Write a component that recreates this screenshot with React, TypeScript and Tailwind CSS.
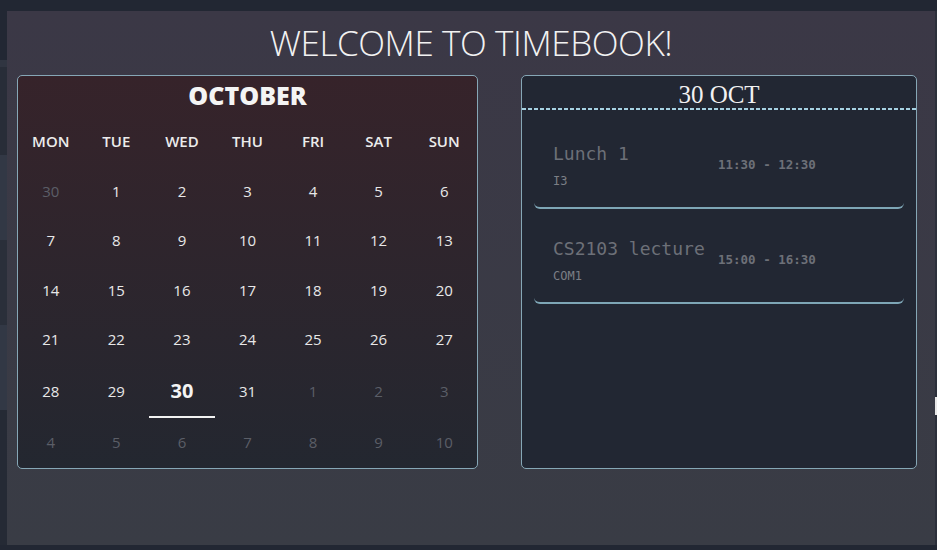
import React from "react";

const headers = ["MON", "TUE", "WED", "THU", "FRI", "SAT", "SUN"];

type Cell = { n: number; dim?: boolean; sel?: boolean };

const rows: Cell[][] = [
  [{ n: 30, dim: true }, { n: 1 }, { n: 2 }, { n: 3 }, { n: 4 }, { n: 5 }, { n: 6 }],
  [{ n: 7 }, { n: 8 }, { n: 9 }, { n: 10 }, { n: 11 }, { n: 12 }, { n: 13 }],
  [{ n: 14 }, { n: 15 }, { n: 16 }, { n: 17 }, { n: 18 }, { n: 19 }, { n: 20 }],
  [{ n: 21 }, { n: 22 }, { n: 23 }, { n: 24 }, { n: 25 }, { n: 26 }, { n: 27 }],
  [{ n: 28 }, { n: 29 }, { n: 30, sel: true }, { n: 31 }, { n: 1, dim: true }, { n: 2, dim: true }, { n: 3, dim: true }],
  [{ n: 4, dim: true }, { n: 5, dim: true }, { n: 6, dim: true }, { n: 7, dim: true }, { n: 8, dim: true }, { n: 9, dim: true }, { n: 10, dim: true }],
];

const rowHeights = ["h-[49.5px]", "h-[49.5px]", "h-[49.5px]", "h-[49.5px]", "h-[54px]", "h-[49px]"];

const events = [
  { title: "Lunch 1", place: "I3", time: "11:30 - 12:30" },
  { title: "CS2103 lecture", place: "COM1", time: "15:00 - 16:30" },
];

export default function App() {
  return (
    <div className="w-[937px] h-[550px] bg-[#222733] flex flex-col overflow-hidden font-['Open_Sans',sans-serif]">
      <div className="h-[11px] shrink-0" />
      <div className="flex h-[534px]">
        {/* left strip (sidebar behind) */}
        <div className="w-[7px] flex flex-col">
          <div className="h-[49px]" />
          <div className="h-[7px] bg-[#303541]" />
          <div className="h-[88px] bg-[#282d38]" />
          <div className="h-[85px] bg-[#323845]" />
          <div className="h-[85px] bg-[#2a2f3a]" />
          <div className="h-[85px] bg-[#323845]" />
          <div className="flex-1 bg-[#252a35]" />
        </div>
        {/* main panel */}
        <div className="flex-1 flex flex-col bg-gradient-to-b from-[#3b3846] to-[#393c45]">
          <div className="h-[64px] flex items-center justify-center">
            <h1 className="text-[35px] font-light text-[#f2f2f2] tracking-[-0.4px] leading-none -mt-[1px]">
              WELCOME TO TIMEBOOK!
            </h1>
          </div>
          <div className="flex pl-[10px] gap-[43px]">
            {/* calendar */}
            <div className="w-[461px] h-[394px] border border-[#86a7b6] rounded-[5px] bg-gradient-to-b from-[#36232a] to-[#232730] flex flex-col overflow-hidden">
              <div className="h-[41px] flex items-start justify-center pt-[4px]">
                <span className="text-[25px] font-extrabold text-[#f4f4f4] leading-[30px]">OCTOBER</span>
              </div>
              <div className="grid grid-cols-7 h-[49px]">
                {headers.map((h) => (
                  <div key={h} className="flex items-center justify-center text-[15px] font-semibold text-[#ececec]">
                    {h}
                  </div>
                ))}
              </div>
              {rows.map((r, i) => (
                <div key={i} className={`grid grid-cols-7 ${rowHeights[i]}`}>
                  {r.map((c, j) =>
                    c.sel ? (
                      <div key={j} className="flex items-center justify-center border-b-[2px] border-[#f2f2f2]">
                        <span className="text-[20px] font-bold text-[#f4f4f4] mt-[2px]">{c.n}</span>
                      </div>
                    ) : (
                      <div
                        key={j}
                        className={`flex items-center justify-center text-[15px] ${c.dim ? "text-[#5b5e67]" : "text-[#e8e8e8]"}`}
                      >
                        {c.n}
                      </div>
                    )
                  )}
                </div>
              ))}
            </div>
            {/* events */}
            <div className="w-[396px] h-[394px] border border-[#86a7b6] rounded-[5px] bg-[#222733] flex flex-col">
              <div className="h-[31px] flex items-end justify-center">
                <span className="font-['Liberation_Serif',serif] text-[25px] text-[#f2f2f2] leading-none">30 OCT</span>
              </div>
              <div className="h-[2px] mt-[1px] bg-[repeating-linear-gradient(90deg,#a6d1e2_0_4px,transparent_4px_6px)]" />
              <div className="px-[12px] pt-[7px] flex flex-col gap-[3px]">
                {events.map((e) => (
                  <div
                    key={e.title}
                    className="h-[92px] border-b-2 border-[#7ea6b6] rounded-[6px] grid grid-cols-2 items-center font-['DejaVu_Sans_Mono',monospace]"
                  >
                    <div className="pl-[19px] flex flex-col pt-[6px]">
                      <span className="text-[18px] leading-[24px] text-[#6d7078]">{e.title}</span>
                      <span className="text-[12px] leading-[16px] mt-[7px] text-[#7c7f86]">{e.place}</span>
                    </div>
                    <div className="text-[12.5px] font-semibold text-[#6d7078] mt-[6px] -ml-[1px]">{e.time}</div>
                  </div>
                ))}
              </div>
            </div>
          </div>
        </div>
        {/* right strip */}
        <div className="w-[2px] flex flex-col bg-[#2c303b]">
          <div className="h-[386px]" />
          <div className="h-[18px] bg-[#e8e8e8]" />
        </div>
      </div>
      <div className="flex-1" />
    </div>
  );
}
